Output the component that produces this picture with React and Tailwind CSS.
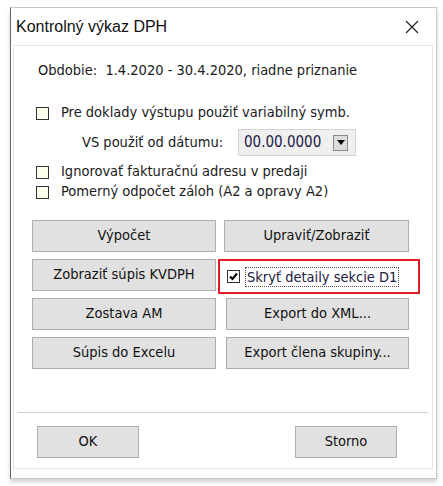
import React from "react";

const font = { fontFamily: "Tahoma, 'DejaVu Sans Condensed', 'DejaVu Sans', sans-serif" };

function Box({ checked }) {
  return (
    <span className="inline-flex items-center justify-center w-[13px] h-[13px] border border-[#333] bg-[#fdfdec] shrink-0">
      {checked && (
        <svg width="11" height="11" viewBox="0 0 11 11">
          <path d="M2 5.5 L4.5 8 L9 2.5" fill="none" stroke="#000" strokeWidth="2" />
        </svg>
      )}
    </span>
  );
}

function Btn({ children, className = "" }) {
  return (
    <button className={"h-[32px] bg-[#e1e1e1] border border-[#adadad] text-[14.5px] text-[#111] flex items-center justify-center " + className}>
      {children}
    </button>
  );
}

export default function App() {
  return (
    <div className="w-[443px] h-[486px] bg-white overflow-hidden" style={font}>
      <div className="ml-[10px] mt-[7px] w-[427px] h-[472px] bg-white border border-[#c8c8c8] border-l-[#666] shadow-[0_3px_4px_rgba(0,0,0,0.18)] flex flex-col">
        {/* Title bar */}
        <div className="h-[37px] flex items-center justify-between pl-[5px] pr-[17px]">
          <span className="text-[16px] text-[#111]" style={{ fontFamily: "'Liberation Sans', Arial, sans-serif" }}>
            Kontrolný výkaz DPH
          </span>
          <svg width="14" height="14" viewBox="0 0 14 14">
            <path d="M1 1 L13 13 M13 1 L1 13" stroke="#222" strokeWidth="1.2" />
          </svg>
        </div>

        {/* Content */}
        <div className="ml-[2px] w-[420px] h-[424px] border border-[#e6e6e6] flex flex-col text-[14.5px] text-[#1a1a1a]">
          <div className="pl-[24px] mt-[15px] h-[20px] flex items-center">
            Obdobie:&nbsp; 1.4.2020 - 30.4.2020, riadne priznanie
          </div>

          <div className="pl-[22px] mt-[23px] flex items-center gap-[12px] h-[18px]">
            <Box />
            <span>Pre doklady výstupu použiť variabilný symb.</span>
          </div>

          <div className="pl-[68px] mt-[7px] flex items-center h-[27px]">
            <span className="w-[156px]">VS použiť od dátumu:</span>
            <div className="w-[118px] h-[27px] bg-[#efefef] border border-[#d4d4d4] flex items-center justify-between pl-[5px] pr-[7px]">
              <span className="text-[#20204a] text-[15px]">00.00.0000</span>
              <span className="w-[15px] h-[16px] bg-[#dcdcdc] border border-[#8a8a8a] flex items-center justify-center">
                <svg width="8" height="5" viewBox="0 0 8 5"><path d="M0 0 H8 L4 5 Z" fill="#000" /></svg>
              </span>
            </div>
          </div>

          <div className="pl-[22px] mt-[7px] flex items-center gap-[12px] h-[18px]">
            <Box />
            <span>Ignorovať fakturačnú adresu v predaji</span>
          </div>
          <div className="pl-[22px] mt-[2px] flex items-center gap-[12px] h-[18px]">
            <Box />
            <span>Pomerný odpočet záloh (A2 a opravy A2)</span>
          </div>

          <div className="pl-[18px] mt-[19px] grid grid-cols-[184px_185px] gap-x-[8px] gap-y-[7px]">
            <Btn>Výpočet</Btn>
            <Btn>Upraviť/Zobraziť</Btn>
            <Btn>Zobraziť súpis KVDPH</Btn>
            <div className="-ml-[6px] w-[202px] h-[35px] border-2 border-[#e21b2b] flex items-center pl-[7px] gap-[5px]">
              <span className="inline-flex items-center justify-center w-[13px] h-[13px] border border-[#333] bg-white">
                <svg width="11" height="11" viewBox="0 0 11 11">
                  <path d="M2 5.5 L4.5 8 L9 2.5" fill="none" stroke="#000" strokeWidth="2" />
                </svg>
              </span>
              <span className="border border-dotted border-[#555] px-[1px] leading-[18px] text-[#1b2040]">Skryť detaily sekcie D1</span>
            </div>
            <Btn className="mt-[-3px]">Zostava AM</Btn>
            <Btn className="mt-[-3px] ml-[2px]">Export do XML...</Btn>
            <Btn>Súpis do Excelu</Btn>
            <Btn className="ml-[2px]">Export člena skupiny...</Btn>
          </div>

          <div className="mt-[43px] mx-[4px] h-px bg-[#d0d0d0]" />

          <div className="mt-[13px] flex justify-between pl-[23px] pr-[35px]">
            <Btn className="w-[102px]">OK</Btn>
            <Btn className="w-[102px]">Storno</Btn>
          </div>
        </div>
      </div>
    </div>
  );
}
